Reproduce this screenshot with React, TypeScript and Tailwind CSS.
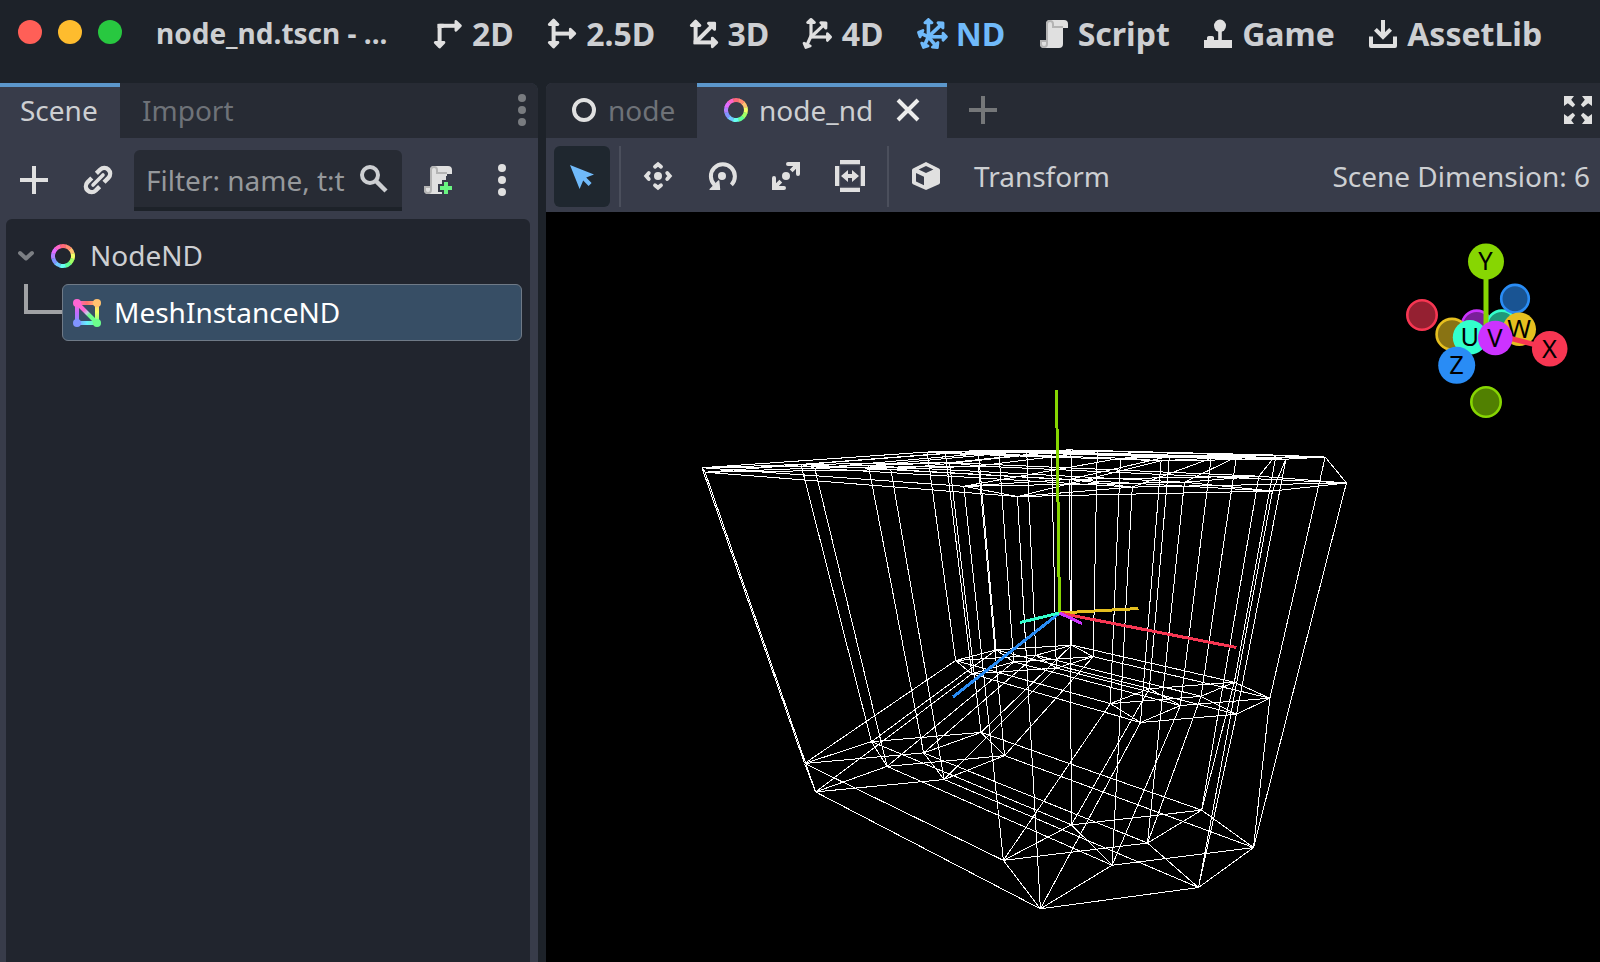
import React, { type ReactNode } from "react";

/* ---------- icons (16x16 grid) ---------- */

function Icon({ children, className = "" }: { children: ReactNode; className?: string }) {
  return (
    <svg viewBox="0 0 16 16" className={`size-8 shrink-0 ${className}`} fill="none">
      {children}
    </svg>
  );
}

/** A line from one grid point to another that ends in a solid arrowhead. */
function Arrow({ from, to, w = 2, head = 3.2 }: { from: [number, number]; to: [number, number]; w?: number; head?: number }) {
  const dx = to[0] - from[0];
  const dy = to[1] - from[1];
  const len = Math.hypot(dx, dy);
  const ux = dx / len;
  const uy = dy / len;
  const bx = to[0] - ux * head * 0.95;
  const by = to[1] - uy * head * 0.95;
  const h = head * 0.68;
  return (
    <>
      <path d={`M${from[0]} ${from[1]}L${bx} ${by}`} stroke="currentColor" strokeWidth={w} />
      <path
        d={`M${to[0] - ux * 0.8} ${to[1] - uy * 0.8}L${bx - uy * h} ${by + ux * h}L${bx + uy * h} ${by - ux * h}Z`}
        fill="currentColor"
        stroke="currentColor"
        strokeWidth="1.4"
        strokeLinejoin="round"
      />
    </>
  );
}

const Icon2D = () => (
  <Icon>
    <path d="M2.800 5V2.900h3V5z" fill="currentColor" />
    <Arrow from={[3.7, 3.9]} to={[15, 3.9]} />
    <Arrow from={[3.8, 3]} to={[3.8, 15.3]} />
  </Icon>
);

const Icon25D = () => (
  <Icon>
    <Arrow from={[3.8, 8]} to={[3.8, 0.2]} />
    <Arrow from={[3.8, 8]} to={[3.8, 15.3]} />
    <Arrow from={[3.8, 7.8]} to={[15.2, 7.8]} />
  </Icon>
);

const Icon3D = () => (
  <Icon>
    <Arrow from={[3.8, 13]} to={[3.8, 0.7]} />
    <Arrow from={[2.8, 12.2]} to={[15.2, 12.2]} />
    <Arrow from={[4, 12]} to={[13.9, 2]} />
  </Icon>
);

const Icon4D = () => (
  <Icon>
    <Arrow from={[4.5, 9]} to={[4.5, -0.1]} w={1.6} head={2.5} />
    <Arrow from={[4.5, 9.5]} to={[15.1, 9.5]} w={1.6} head={2.5} />
    <Arrow from={[4.5, 9.5]} to={[12.6, 1.9]} w={1.6} head={2.8} />
    <Arrow from={[4.5, 9]} to={[1.6, 15.5]} w={1.6} head={2.5} />
  </Icon>
);

const IconND = () => (
  <Icon>
    <Arrow from={[6.2, 9.4]} to={[6.2, -0.1]} w={1.8} head={2.6} />
    <Arrow from={[6.2, 9.4]} to={[16, 9.4]} w={1.8} head={2.6} />
    <Arrow from={[6.2, 9.4]} to={[14.1, 1.9]} w={1.8} head={2.7} />
    <Arrow from={[6.2, 9.4]} to={[11.2, 15.4]} w={1.8} head={2.7} />
    <Arrow from={[6.2, 9.4]} to={[3.4, 15.5]} w={1.8} head={2.6} />
    <Arrow from={[6.2, 9.4]} to={[0.5, 6.8]} w={1.8} head={2.6} />
  </Icon>
);

const ScriptShape = () => (
  <>
    <path d="M6 1a2 2 0 0 0-2 2v8H1v2a2 2 0 0 0 2 2h7.500a2 2 0 0 0 2-2V5H15V3a2 2 0 0 0-2-2z" fill="#e0e0e0" />
    <path
      d="M12.500 4.500H7.500V3a1.500 1.500 0 0 0-3 0v10a1.500 1.500 0 0 1-3 0v-1.500H4.500"
      stroke="#b4b4b4"
      strokeWidth="1"
    />
  </>
);

const IconScript = () => (
  <Icon>
    <ScriptShape />
  </Icon>
);

const IconGame = () => (
  <Icon>
    <ellipse cx="9" cy="3.900" rx="3" ry="3.100" fill="currentColor" />
    <path d="M8.100 6h1.800v5H15v4H1v-4h1.500V9.800A.9.9 0 0 1 3.400 9h1.700a.9.9 0 0 1 .9.8V11h2.100z" fill="currentColor" />
  </Icon>
);

const IconAssetLib = () => (
  <Icon>
    <path d="M8 1v8M4.200 5.700 8 9.500l3.800-3.800" stroke="currentColor" strokeWidth="2" />
    <path d="M2 9.200V14h12V9.200" stroke="currentColor" strokeWidth="2" strokeLinejoin="round" />
  </Icon>
);

const IconPlus = () => (
  <Icon>
    <path d="M8 1v14M1 8h14" stroke="currentColor" strokeWidth="2" />
  </Icon>
);

const IconClose = () => (
  <Icon>
    <path d="m3 3 10 10M13 3 3 13" stroke="currentColor" strokeWidth="2" />
  </Icon>
);

const IconLink = () => (
  <Icon>
    <path
      d="M7.200 4.700 9.150 2.750a2.900 2.900 0 0 1 4.100 4.100L11 9.100M8.800 11.300l-1.950 1.950a2.900 2.900 0 0 1-4.100-4.100L4.900 7"
      stroke="currentColor"
      strokeWidth="2.200"
    />
    <path d="m5.500 10.500 5-5" stroke="currentColor" strokeWidth="1.800" strokeLinecap="round" />
  </Icon>
);

const IconSearch = () => (
  <Icon>
    <circle cx="6" cy="6" r="4" stroke="currentColor" strokeWidth="2" />
    <path d="m8.800 8.800 5.200 5.200" stroke="currentColor" strokeWidth="2.200" />
  </Icon>
);

const IconScriptCreate = () => (
  <Icon>
    <ScriptShape />
    <path d="M10 16v-2H8v-4h2V8h2V6h4v10z" fill="#383c4a" />
    <path d="M11 9h2v2h2v2h-2v2h-2v-2H9v-2h2z" fill="#69f581" />
  </Icon>
);

const IconDots = () => (
  <Icon>
    <circle cx="8" cy="2" r="2" fill="currentColor" />
    <circle cx="8" cy="8" r="2" fill="currentColor" />
    <circle cx="8" cy="14" r="2" fill="currentColor" />
  </Icon>
);

const IconRing = () => (
  <Icon>
    <circle cx="8" cy="8" r="5" stroke="currentColor" strokeWidth="2" />
  </Icon>
);

const RAINBOW = ["#ffc270", "#f4ff66", "#a0ff66", "#5fff97", "#66fff0", "#70c8ff", "#8094ff", "#b080ff", "#e36bff", "#ff66c8", "#ff6878", "#ff8c70"];

const IconRainbowRing = () => (
  <Icon>
    {RAINBOW.map((color, i) => {
      const a0 = ((i * 30 - 45) * Math.PI) / 180;
      const a1 = ((i * 30 - 13) * Math.PI) / 180;
      return (
        <path
          key={i}
          d={`M${8 + 5 * Math.cos(a0)} ${8 + 5 * Math.sin(a0)}A5 5 0 0 1 ${8 + 5 * Math.cos(a1)} ${8 + 5 * Math.sin(a1)}`}
          stroke={color}
          strokeWidth="2"
        />
      );
    })}
  </Icon>
);

const IconMesh = () => (
  <Icon>
    <defs>
      <linearGradient id="mesh-top" x1="3" x2="13" y1="0" y2="0" gradientUnits="userSpaceOnUse">
        <stop offset="0" stopColor="#ff66d4" />
        <stop offset=".5" stopColor="#ff7070" />
        <stop offset="1" stopColor="#ffc270" />
      </linearGradient>
      <linearGradient id="mesh-right" x1="0" x2="0" y1="3" y2="13" gradientUnits="userSpaceOnUse">
        <stop offset="0" stopColor="#ffc270" />
        <stop offset=".45" stopColor="#f4ff66" />
        <stop offset="1" stopColor="#6cff8c" />
      </linearGradient>
      <linearGradient id="mesh-bottom" x1="3" x2="13" y1="0" y2="0" gradientUnits="userSpaceOnUse">
        <stop offset="0" stopColor="#8094ff" />
        <stop offset=".5" stopColor="#66f0ff" />
        <stop offset="1" stopColor="#6cff8c" />
      </linearGradient>
      <linearGradient id="mesh-left" x1="0" x2="0" y1="3" y2="13" gradientUnits="userSpaceOnUse">
        <stop offset="0" stopColor="#ff66d4" />
        <stop offset=".5" stopColor="#c36bff" />
        <stop offset="1" stopColor="#8094ff" />
      </linearGradient>
      <linearGradient id="mesh-diagonal" x1="3" x2="13" y1="3" y2="13" gradientUnits="userSpaceOnUse">
        <stop offset=".35" stopColor="#ff66d4" />
        <stop offset=".5" stopColor="#c8c8e8" />
        <stop offset=".6" stopColor="#6cff8c" />
      </linearGradient>
    </defs>
    <path d="M3 2h10v2H3z" fill="url(#mesh-top)" />
    <path d="M12 3h2v10h-2z" fill="url(#mesh-right)" />
    <path d="M3 12h10v2H3z" fill="url(#mesh-bottom)" />
    <path d="M2 3h2v10H2z" fill="url(#mesh-left)" />
    <path d="m3 3 10 10" stroke="url(#mesh-diagonal)" strokeWidth="2" />
    <circle cx="3" cy="3" r="2" fill="#ff66d4" />
    <circle cx="13" cy="3" r="2" fill="#ffc270" />
    <circle cx="3" cy="13" r="2" fill="#8094ff" />
    <circle cx="13" cy="13" r="2" fill="#6cff8c" />
  </Icon>
);

const IconExpand = () => (
  <Icon>
    <path
      d="M1 1h5L4.600 2.900 6.600 5.400 5.400 6.600 2.900 4.600 1 6zM15 1h-5l1.400 1.900-2 2.500 1.200 1.200 2.500-2L15 6zM1 15h5l-1.400-1.900 2-2.500-1.200-1.200-2.500 2L1 10zM15 15h-5l1.400-1.900-2-2.500 1.200-1.200 2.500 2L15 10z"
      fill="currentColor"
    />
  </Icon>
);

const IconSelect = () => (
  <Icon>
    <path d="M2 2l4.800 12 1.800-4.200 2.700 2.700 1.500-1.500-2.700-2.700L14 6.800z" fill="currentColor" />
  </Icon>
);

const IconMove = () => (
  <Icon>
    <circle cx="8" cy="8" r="2" fill="currentColor" />
    <path
      d="M6.500 3.400 8 2.100l1.500 1.300M6.500 12.600 8 13.900l1.500-1.300M3.400 6.500 2.100 8l1.300 1.500M12.600 6.500 13.900 8l-1.300 1.500"
      stroke="currentColor"
      strokeWidth="1.900"
      strokeLinecap="round"
    />
  </Icon>
);

const IconRotate = () => (
  <Icon>
    <circle cx="8" cy="8" r="2" fill="currentColor" />
    <path d="M12.700 12.400A6 6 0 1 0 4.300 12.500" stroke="currentColor" strokeWidth="2" />
    <path d="M2 14.700H6.800l-.4-4.300z" fill="currentColor" stroke="currentColor" strokeWidth=".6" strokeLinejoin="round" />
  </Icon>
);

const IconScale = () => (
  <Icon>
    <circle cx="8" cy="8" r="2" fill="currentColor" />
    <path
      d="M9 1a1 1 0 0 0 0 2h2.600l-1.700 1.700 1.400 1.400L13 4.400V7a1 1 0 0 0 2 0V1zM7 15a1 1 0 0 0 0-2H4.400l1.700-1.700-1.400-1.400L3 11.600V9a1 1 0 0 0-2 0v6z"
      fill="currentColor"
    />
  </Icon>
);

const IconStretch = () => (
  <Icon>
    <path d="M3 0h10v2H3zM3 14h10v2H3zM.5 3h2v10h-2zM13.500 3h2v10h-2z" fill="currentColor" />
    <path d="M3 2.300h10M3 13.700h10M2.800 3v10M13.200 3v10" stroke="currentColor" strokeOpacity=".35" strokeWidth=".5" />
    <path d="M3.500 8 7 5v2h2V5l3.500 3L9 11V9H7v2z" fill="currentColor" />
  </Icon>
);

const IconCube = () => (
  <Icon>
    <path
      fillRule="evenodd"
      d="M8 1l6.500 3.300q.5.250.5.800v6.200q0 .5-.5.800L8 15l-6.500-2.900q-.5-.3-.5-.8V5.100q0-.550.5-.8zM8 3 4.300 4.800 8 6.500l3.700-1.700zM3 6.500v4.300l4 1.800V8.400z"
      fill="currentColor"
    />
  </Icon>
);

/* ---------- six-dimensional box ---------- */

// Homogeneous camera rows: constant term, then the x, y, z, w, u and v axes.
const ROW_X = [0.001, 1.07661, -0.02205, -0.53569, 0.58421, -0.27342, 0.15425];
const ROW_Y = [0.00076, 0.21237, -1.30275, 0.41774, -0.03141, 0.06516, 0.07299];
const ROW_D = [1, -0.11356, -0.1398, -0.22344, 0.01611, -0.03561, -0.04014];
const AXES = [0, 1, 2, 3, 4, 5];

const dot = (row: number[], p: number[]) => row.reduce((sum, k, i) => sum + k * p[i], 0);

const vertices = Array.from({ length: 64 }, (_, i) => {
  const p = [1, ...AXES.map((axis) => ((i >> axis) & 1 ? 1 : -1))];
  const depth = dot(ROW_D, p);
  return { x: 514 + (100 * dot(ROW_X, p)) / depth, y: 401 + (100 * dot(ROW_Y, p)) / depth };
});

const edges = vertices.flatMap((a, i) =>
  AXES.filter((axis) => !((i >> axis) & 1)).map((axis) => ({ a, b: vertices[i | (1 << axis)] })),
);

const axisLines = [
  { color: "#e5bf1f", x: 592.5, y: 396.5 },
  { color: "#f73652", x: 690.5, y: 435.5 },
  { color: "#87d602", x: 510.5, y: 178 },
  { color: "#298cf5", x: 407, y: 485 },
  { color: "#33ffcc", x: 474, y: 410.5 },
  { color: "#cc33ff", x: 536, y: 411.5 },
];

function Gizmo() {
  return (
    <g>
      <circle cx="930.7" cy="113.3" r="14.7" fill="#7a1f99" stroke="#cc33ff" strokeWidth="2.600" />
      <circle cx="955.7" cy="113.3" r="14.7" fill="#1f997a" stroke="#33ffcc" strokeWidth="2.600" />
      <circle cx="969" cy="86.7" r="13.8" fill="#195493" stroke="#298cf5" strokeWidth="2.600" />
      <circle cx="906" cy="122.3" r="15.400" fill="#897313" stroke="#e5bf1f" strokeWidth="2.600" />
      <circle cx="876" cy="103" r="14.7" fill="#942031" stroke="#f73652" strokeWidth="2.600" />
      <circle cx="940" cy="190" r="14.7" fill="#518001" stroke="#87d602" strokeWidth="2.600" />
      <path d="M940 120V50" stroke="#87d602" strokeWidth="5" />
      <circle cx="973.3" cy="117.3" r="16.700" fill="#e5bf1f" />
      <g fontFamily="Noto Sans, sans-serif" fontSize="25.500" textAnchor="middle">
        <text x="973" y="125.5">W</text>
      </g>
      <path d="m940 120 64 16.700" stroke="#f73652" strokeWidth="5" />
      <circle cx="924" cy="125.3" r="17.200" fill="#33ffcc" />
      <g fontFamily="Noto Sans, sans-serif" fontSize="25.500" textAnchor="middle">
        <text x="923.7" y="134">U</text>
      </g>
      <circle cx="949.3" cy="126" r="17.300" fill="#cc33ff" />
      <circle cx="940" cy="49.500" r="18" fill="#87d602" />
      <circle cx="1003.7" cy="136.700" r="17.800" fill="#f73652" />
      <circle cx="910.7" cy="153.300" r="18.500" fill="#298cf5" />
      <g fontFamily="Noto Sans, sans-serif" fontSize="25.500" textAnchor="middle">
        <text x="939.5" y="58">Y</text>
        <text x="949" y="135">V</text>
        <text x="1003.5" y="146">X</text>
        <text x="910.5" y="162">Z</text>
      </g>
    </g>
  );
}

function Viewport() {
  return (
    <svg viewBox="0 0 1054 750" className="h-[750px] w-[1054px] bg-black">
      <g shapeRendering="crispEdges" stroke="#fff" strokeWidth="1">
        {edges.map(({ a, b }, i) => (
          <line key={i} x1={a.x} y1={a.y} x2={b.x} y2={b.y} />
        ))}
      </g>
      <g shapeRendering="crispEdges" strokeWidth="3">
        {axisLines.map(({ color, x, y }) => (
          <line key={color} x1="513.5" y1="401" x2={x} y2={y} stroke={color} />
        ))}
      </g>
      <Gizmo />
    </svg>
  );
}

/* ---------- chrome ---------- */

const modes = [
  { label: "2D", icon: <Icon2D /> },
  { label: "2.5D", icon: <Icon25D /> },
  { label: "3D", icon: <Icon3D /> },
  { label: "4D", icon: <Icon4D /> },
  { label: "ND", icon: <IconND />, active: true },
  { label: "Script", icon: <IconScript /> },
  { label: "Game", icon: <IconGame /> },
  { label: "AssetLib", icon: <IconAssetLib /> },
];

function TitleBar() {
  return (
    <header className="flex h-[83px] shrink-0 items-center pb-4 pl-[18px] font-bold">
      <div className="flex gap-4 pb-[3px]">
        <span className="size-6 rounded-full bg-[#ff5f57]" />
        <span className="size-6 rounded-full bg-[#febc2e]" />
        <span className="size-6 rounded-full bg-[#28c840]" />
      </div>
      <h1 className="ml-[34px] w-[276px] whitespace-nowrap pb-px text-[28px] leading-10">node_nd.tscn - ...</h1>
      <nav className="flex gap-[32.4px] text-[32px] leading-10">
        {modes.map(({ label, icon, active }) => (
          <button key={label} className={active ? "flex items-center gap-2 text-[#70bafa]" : "flex items-center gap-2"}>
            <span className={active ? "" : "text-[#e0e0e0]"}>{icon}</span>
            {label}
          </button>
        ))}
      </nav>
    </header>
  );
}

function SceneDock() {
  return (
    <aside className="flex w-[538px] shrink-0 flex-col overflow-hidden rounded-tr-lg bg-[#383c4a]">
      <div className="flex h-[55px] bg-[#272b34]">
        <div className="flex w-[120px] items-center border-t-4 border-[#5c97cb] bg-[#383c4a] pb-1.5 pl-5">Scene</div>
        <div className="flex items-center pb-0.5 pl-[22px] text-[#6e7278]">Import</div>
        <div className="ml-auto flex items-center pb-0.5 text-[#797c80]">
          <IconDots />
        </div>
      </div>
      <div className="flex h-[81px] items-center pb-2 pl-[18px] pt-3 text-[#e0e0e0]">
        <span className="pb-0.5">
          <IconPlus />
        </span>
        <span className="ml-8 pb-0.5">
          <IconLink />
        </span>
        <div className="ml-5 flex h-[61px] w-[268px] items-center rounded-t-md border-b-4 border-[#1d2229] bg-[#272b34] pl-3 pt-[3px] text-[#96999c]">
          <span className="w-[212px] overflow-hidden whitespace-nowrap">Filter: name, t:t</span>
          <span className="pb-0.5 text-[#cdcfd2]">
            <IconSearch />
          </span>
        </div>
        <span className="ml-5 pb-0.5">
          <IconScriptCreate />
        </span>
        <span className="ml-8 pb-0.5">
          <IconDots />
        </span>
      </div>
      <div className="ml-1.5 mr-2 flex flex-1 flex-col rounded-t-md bg-[#21252e] pt-2">
        <div className="flex h-[57px] items-center pl-3">
          <svg viewBox="0 0 16 12" className="h-3 w-4 text-[#7c7f84]" fill="none">
            <path d="m2 3 6 5.500L14 3" stroke="currentColor" strokeWidth="4" strokeLinecap="round" strokeLinejoin="round" />
          </svg>
          <span className="ml-[13px]">
            <IconRainbowRing />
          </span>
          <span className="ml-[11px] pb-0.5">NodeND</span>
        </div>
        <div className="flex h-[57px] pl-[18px] pr-2">
          <div className="h-[30px] w-[38px] border-b-4 border-l-4 border-[#a0a2a5]" />
          <div className="flex flex-1 items-center rounded-md border border-[#6f7a87] bg-[#374e65] pl-2 text-white">
            <IconMesh />
            <span className="ml-[11px] pb-0.5">MeshInstanceND</span>
          </div>
        </div>
      </div>
    </aside>
  );
}

function Workspace() {
  return (
    <main className="flex flex-1 flex-col overflow-hidden rounded-tl-md bg-[#383c4a]">
      <div className="flex h-[55px] items-center bg-[#272b34]">
        <div className="flex h-full w-[151px] items-center gap-2 pb-0.5 pl-[22px] text-[#6e7278]">
          <span className="text-[#e0e0e0]">
            <IconRing />
          </span>
          node
        </div>
        <div className="flex h-full w-[250px] items-center border-t-4 border-[#5c97cb] bg-[#383c4a] pb-1.5 pl-[23px]">
          <IconRainbowRing />
          <span className="ml-[7px] w-[125px]">node_nd</span>
          <span className="ml-2 text-[#ececec]">
            <IconClose />
          </span>
        </div>
        <span className="ml-5 pb-0.5 text-[#757779]">
          <IconPlus />
        </span>
        <span className="ml-auto mr-1.5 pb-0.5 text-[#e0e0e0]">
          <IconExpand />
        </span>
      </div>
      <div className="flex h-[74px] items-center pl-2 pr-2.5 text-[#e0e0e0]">
        <div className="mt-[3px] flex h-[61px] w-14 items-center justify-center rounded-md bg-[#1f272f] text-[#70bafa]">
          <IconSelect />
        </div>
        <span className="ml-[9px] mt-[3px] h-[61px] w-0.5 bg-[#4b4f5c]" />
        <div className="ml-[21px] mt-0.5 flex gap-8">
          <IconMove />
          <IconRotate />
          <IconScale />
          <IconStretch />
        </div>
        <span className="ml-[21px] mt-[3px] h-[61px] w-0.5 bg-[#4b4f5c]" />
        <span className="ml-[21px] mt-0.5">
          <IconCube />
        </span>
        <span className="ml-8 mt-0.5 text-[#cdcfd2]">Transform</span>
        <span className="ml-auto mt-0.5 text-[#cdcfd2]">Scene Dimension: 6</span>
      </div>
      <Viewport />
    </main>
  );
}

export default function App() {
  return (
    <div className="flex h-[962px] w-[1600px] flex-col overflow-hidden bg-[#1d2229] font-['Noto_Sans',sans-serif] text-[28px] leading-10 text-[#cdcfd2]">
      <TitleBar />
      <div className="flex min-h-0 flex-1 gap-2">
        <SceneDock />
        <Workspace />
      </div>
    </div>
  );
}
